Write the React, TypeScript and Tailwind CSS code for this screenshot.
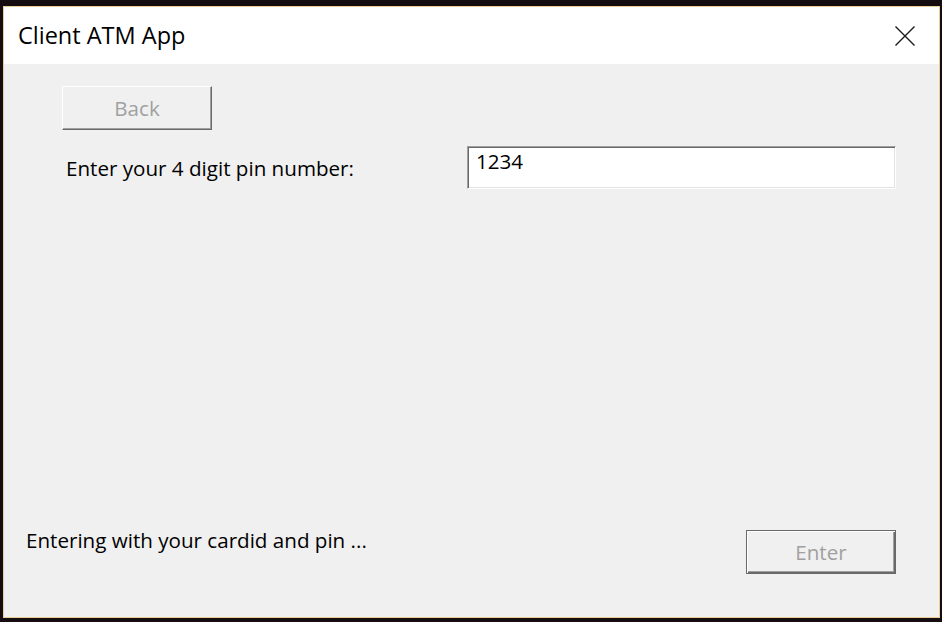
import { useState } from 'react'

const font = { fontFamily: '"Open Sans", "Noto Sans", sans-serif' }

function CloseIcon() {
  return (
    <svg width="20" height="20" viewBox="0 0 20 20" className="block">
      <path d="M0.5 0.5 L19.5 19.5 M19.5 0.5 L0.5 19.5" stroke="#1a1a1a" strokeWidth="1.4" fill="none" />
    </svg>
  )
}

export default function App() {
  const [pin, setPin] = useState('1234')

  return (
    <div className="w-[942px] h-[622px] bg-[#150c12] overflow-hidden" style={font}>
      <div className="ml-[3px] mt-[6px] w-[937px] h-[612px] border border-[#e9cf93] flex flex-col">
        {/* Title bar */}
        <div className="h-[57px] bg-white flex items-center justify-between pl-[14px] pr-[24px] shrink-0">
          <span className="text-[23.5px] text-black">Client ATM App</span>
          <CloseIcon />
        </div>

        {/* Content */}
        <div className="flex-1 bg-[#f0f0f0] flex flex-col pb-[43px] text-[20.6px] text-black">
          <button
            disabled
            className="ml-[58px] mt-[22px] w-[150px] h-[44px] bg-[#f0f0f0] border-t border-l border-t-white border-l-white border-b border-r border-b-[#696969] border-r-[#696969] shadow-[inset_-1px_-1px_0_#a0a0a0] text-[#a0a0a0] flex items-center justify-center"
          >
            Back
          </button>

          <div className="mt-[16px] flex items-center">
            <label className="pl-[62px] w-[463px] shrink-0 leading-[28px]">Enter your 4 digit pin number:</label>
            <input
              value={pin}
              onChange={(e) => setPin(e.target.value)}
              className="w-[429px] h-[43px] bg-white outline-none border border-t-[#a0a0a0] border-l-[#a0a0a0] border-b-white border-r-white shadow-[inset_1px_1px_0_#696969,inset_-1px_-1px_0_#e3e3e3] pl-[8px] pr-[7px] pt-0 pb-[14px] leading-[26px] text-black"
            />
          </div>

          <div className="flex-1" />

          <div className="flex items-start pl-[22px] pr-[43px]">
            <span className="leading-[28px]">Entering with your cardid and pin ...</span>
            <button
              disabled
              className="ml-auto mt-[4px] w-[150px] h-[44px] bg-[#f0f0f0] border border-[#696969] shadow-[inset_1px_1px_0_#ffffff,inset_-1px_-1px_0_#696969,inset_-2px_-2px_0_#a0a0a0] text-[#a0a0a0] flex items-center justify-center"
            >
              Enter
            </button>
          </div>
        </div>
      </div>
    </div>
  )
}
